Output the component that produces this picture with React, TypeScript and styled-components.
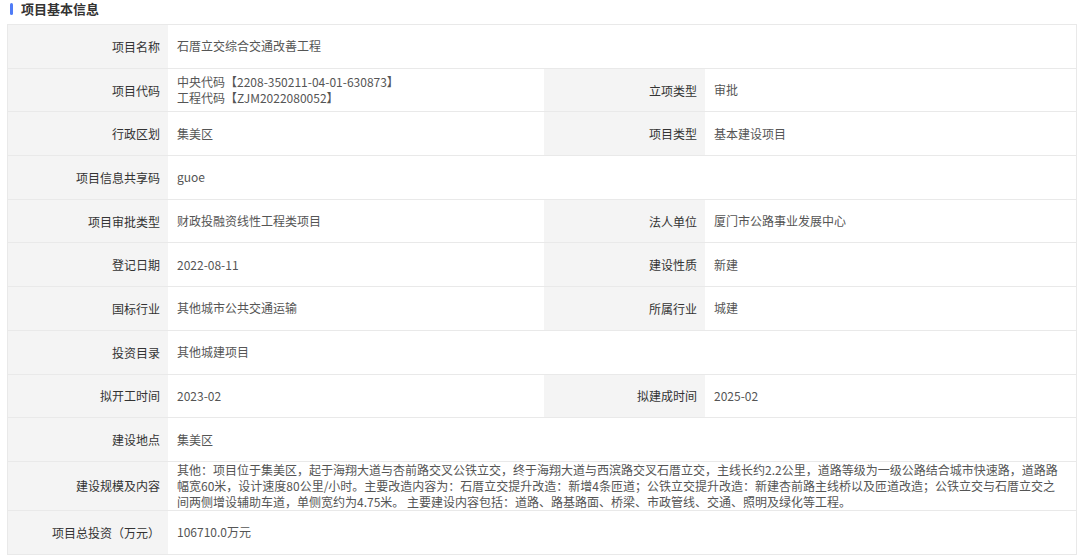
import React from "react";
import styled, { createGlobalStyle } from "styled-components";

const G = createGlobalStyle`
  body { margin: 0; background: #fff; font-family: "Microsoft YaHei", "Noto Sans CJK SC", sans-serif; }
`;
const Page = styled.div`padding: 0 3px 0 7px; width: 1070px;`;
const Title = styled.div`
  height: 17px; display: flex; align-items: center; gap: 8px; padding-left: 3px;
  font-size: 13px; font-weight: bold; color: #333;
  &::before { content: ""; width: 3px; height: 12px; border-radius: 2px; background: #4f7cf7; }
`;
const Table = styled.div`border: 1px solid #e9e9e9; border-bottom: none; margin-top: 7px;`;
const Row = styled.div<{ $h?: number }>`
  display: grid; grid-template-columns: 160px 376px 161px 1fr;
  min-height: ${p => p.$h ?? 43}px; border-bottom: 1px solid #e9e9e9;
`;
const Label = styled.div`
  background: #f4f4f4; color: #333; font-size: 12px; display: flex; align-items: center;
  justify-content: flex-end; padding-right: 8px;
`;
const Value = styled.div<{ $span?: boolean }>`
  color: #555; font-size: 12px; line-height: 16px; display: flex; flex-direction: column;
  justify-content: center; padding: 0 10px 0 9px;
  ${p => p.$span ? "grid-column: 2 / 5;" : ""}
`;

type R = [string, React.ReactNode, string?, string?];
const rows: R[] = [
  ["项目名称", "石厝立交综合交通改善工程"],
  ["项目代码", <><div>中央代码【2208-350211-04-01-630873】</div><div>工程代码【ZJM2022080052】</div></>, "立项类型", "审批"],
  ["行政区划", "集美区", "项目类型", "基本建设项目"],
  ["项目信息共享码", "guoe"],
  ["项目审批类型", "财政投融资线性工程类项目", "法人单位", "厦门市公路事业发展中心"],
  ["登记日期", "2022-08-11", "建设性质", "新建"],
  ["国标行业", "其他城市公共交通运输", "所属行业", "城建"],
  ["投资目录", "其他城建项目"],
  ["拟开工时间", "2023-02", "拟建成时间", "2025-02"],
  ["建设地点", "集美区"],
  ["建设规模及内容", "其他：项目位于集美区，起于海翔大道与杏前路交叉公铁立交，终于海翔大道与西滨路交叉石厝立交，主线长约2.2公里，道路等级为一级公路结合城市快速路，道路路幅宽60米，设计速度80公里/小时。主要改造内容为：石厝立交提升改造：新增4条匝道；公铁立交提升改造：新建杏前路主线桥以及匝道改造；公铁立交与石厝立交之间两侧增设辅助车道，单侧宽约为4.75米。 主要建设内容包括：道路、路基路面、桥梁、市政管线、交通、照明及绿化等工程。"],
  ["项目总投资（万元）", "106710.0万元"],
];

export default function App() {
  return (
    <Page>
      <G />
      <Title>项目基本信息</Title>
      <Table>
        {rows.map((r, i) => (
          <Row key={i} $h={i === 10 ? 47 : 42.7}>
            <Label>{r[0]}</Label>
            {r[2] ? (
              <>
                <Value>{r[1]}</Value>
                <Label>{r[2]}</Label>
                <Value>{r[3]}</Value>
              </>
            ) : (
              <Value $span>{r[1]}</Value>
            )}
          </Row>
        ))}
      </Table>
    </Page>
  );
}
